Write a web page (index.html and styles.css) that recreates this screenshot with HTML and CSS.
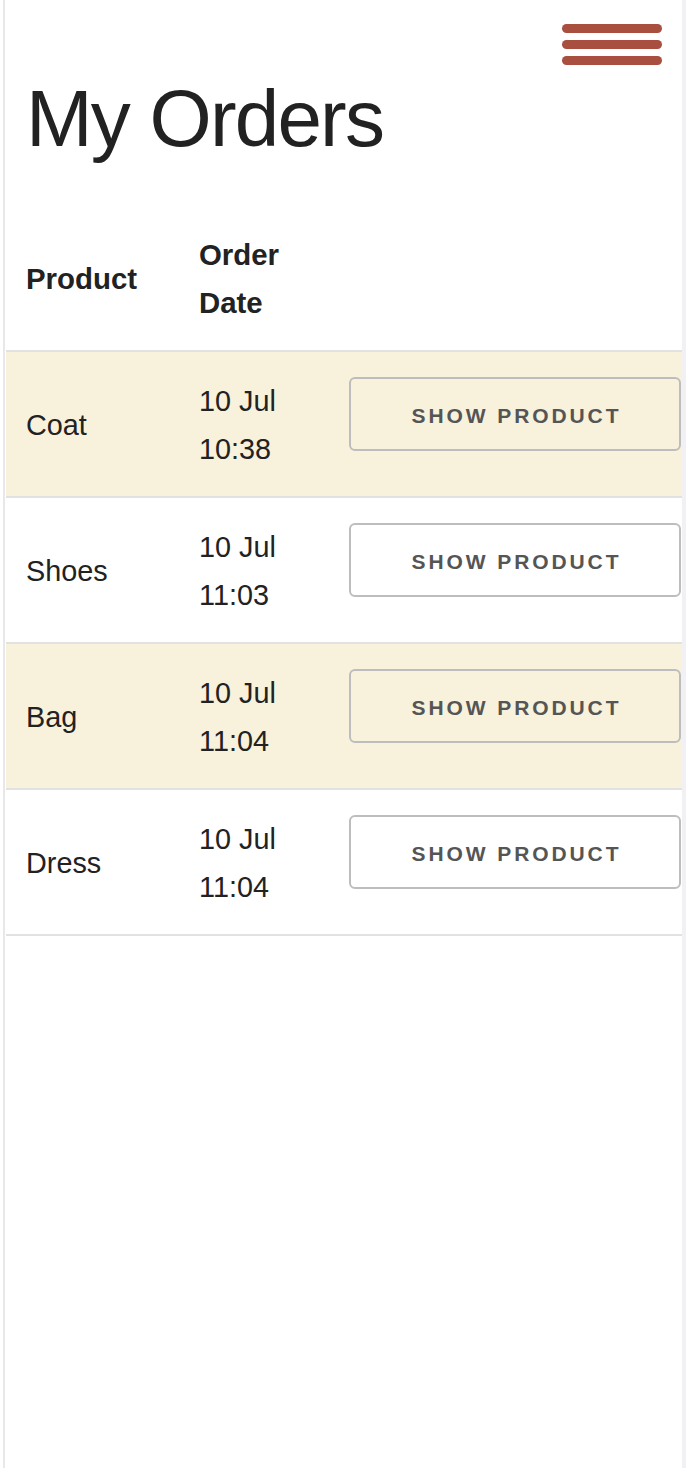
FILE: index.html
```html
<!DOCTYPE html>
<html lang="en">
<head>
<meta charset="utf-8">
<title>My Orders</title>
<link rel="stylesheet" href="styles.css">
</head>
<body>
<div class="frame">
  <header class="topbar">
    <button class="menu" aria-label="Menu">
      <span class="bar"></span>
      <span class="bar"></span>
      <span class="bar"></span>
    </button>
  </header>
  <h1 class="title">My Orders</h1>
  <div class="orders">
    <div class="row head">
      <div class="cell name">Product</div>
      <div class="cell date">Order<br>Date</div>
      <div class="cell action"></div>
    </div>
    <div class="row alt">
      <div class="cell name">Coat</div>
      <div class="cell date">10 Jul<br>10:38</div>
      <div class="cell action"><button class="show">SHOW PRODUCT</button></div>
    </div>
    <div class="row">
      <div class="cell name">Shoes</div>
      <div class="cell date">10 Jul<br>11:03</div>
      <div class="cell action"><button class="show">SHOW PRODUCT</button></div>
    </div>
    <div class="row alt">
      <div class="cell name">Bag</div>
      <div class="cell date">10 Jul<br>11:04</div>
      <div class="cell action"><button class="show">SHOW PRODUCT</button></div>
    </div>
    <div class="row">
      <div class="cell name">Dress</div>
      <div class="cell date">10 Jul<br>11:04</div>
      <div class="cell action"><button class="show">SHOW PRODUCT</button></div>
    </div>
  </div>
</div>
</body>
</html>
```

FILE: styles.css
```css
html, body {
  margin: 0;
  padding: 0;
  background: #ffffff;
}

body {
  font-family: "Liberation Sans", Arial, Helvetica, sans-serif;
  color: #222222;
}

.frame {
  margin-left: 3px;
  border-left: 2px solid #e8e8ea;
  border-right: 4px solid #f1f1f3;
  padding-left: 1px;
  min-height: 1468px;
  box-sizing: border-box;
}

.topbar {
  display: flex;
  justify-content: flex-end;
  padding: 24px 20px 0 0;
}

.menu {
  display: flex;
  flex-direction: column;
  gap: 7px;
  padding: 0;
  margin: 0;
  border: 0;
  background: none;
}

.bar {
  display: block;
  width: 100px;
  height: 9px;
  border-radius: 5px;
  background: #a84f3f;
}

.title {
  margin: 14px 0 48px 0;
  padding-left: 20px;
  font-size: 80px;
  line-height: 80px;
  font-weight: 400;
  letter-spacing: -1.8px;
  color: #222222;
}

.orders {
  display: flex;
  flex-direction: column;
}

.row {
  display: grid;
  grid-template-columns: 153px 130px 1fr;
  column-gap: 20px;
  align-items: center;
  padding: 25px 1px 23px 20px;
  border-bottom: 2px solid #e2e2e2;
  font-size: 28.8px;
  line-height: 48px;
}

.row.head {
  padding-top: 24px;
  font-weight: 700;
  font-size: 29.4px;
}

.row.alt {
  background: #f8f1dc;
}

.cell.action {
  align-self: start;
}

.show {
  display: flex;
  align-items: center;
  justify-content: center;
  width: 100%;
  height: 74px;
  margin: 0;
  padding: 4px 0 0 3px;
  box-sizing: border-box;
  border: 2px solid #bdbdbd;
  border-radius: 6px;
  background: transparent;
  font-family: "Liberation Sans", Arial, Helvetica, sans-serif;
  font-size: 21px;
  font-weight: 700;
  letter-spacing: 2.9px;
  color: #555555;
}
```
